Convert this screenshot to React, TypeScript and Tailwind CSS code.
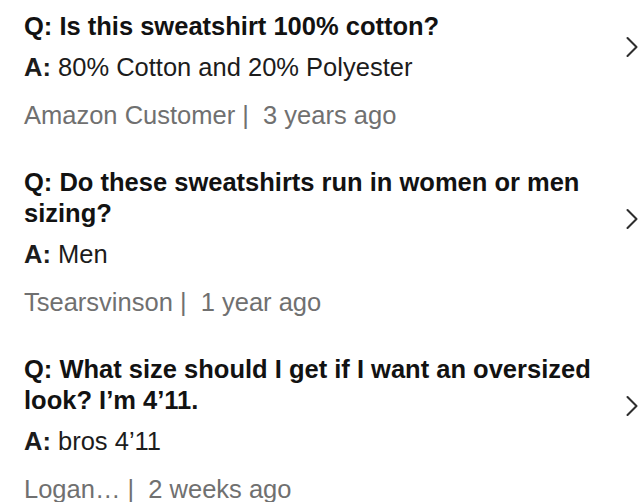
import { ChevronRight } from "lucide-react";

type QA = { q: string[]; a: string; who: string; when: string };

const items: QA[] = [
  { q: ["Is this sweatshirt 100% cotton?"], a: "80% Cotton and 20% Polyester", who: "Amazon Customer", when: "3 years ago" },
  { q: ["Do these sweatshirts run in women or men", "sizing?"], a: "Men", who: "Tsearsvinson", when: "1 year ago" },
  { q: ["What size should I get if I want an oversized", "look? I\u2019m 4\u201911."], a: "bros 4\u201911", who: "Logan\u2026", when: "2 weeks ago" },
];

const Item = ({ item }: { item: QA }) => (
  <div className="flex flex-col">
    <div className="flex items-center">
      <div className="flex-1 flex flex-col">
        <p className="text-[25.5px] leading-[31px] font-bold text-[#121212]">
          Q: {item.q.map((l, i) => (
            <span key={i}>
              {i > 0 && <br />}
              {l}
            </span>
          ))}
        </p>
        <p className="mt-[9px] text-[25.5px] leading-[32px] text-[#1c1c1c]">
          <span className="font-bold">A:</span> {item.a}
        </p>
      </div>
      <ChevronRight className="w-9 h-9 text-[#2e2e2e] -mr-[14px] shrink-0" strokeWidth={1.4} />
    </div>
    <p className="mt-4 text-[25.5px] leading-[32px] text-[#707070]">
      {item.who} |&nbsp; {item.when}
    </p>
  </div>
);

export default function App() {
  return (
    <div className="w-[642px] h-[502px] overflow-hidden bg-white pl-6 pr-[6px] pt-[11px] flex flex-col gap-9" style={{ fontFamily: '"Liberation Sans", Arial, sans-serif' }}>
      {items.map((it, i) => (
        <Item key={i} item={it} />
      ))}
    </div>
  );
}
